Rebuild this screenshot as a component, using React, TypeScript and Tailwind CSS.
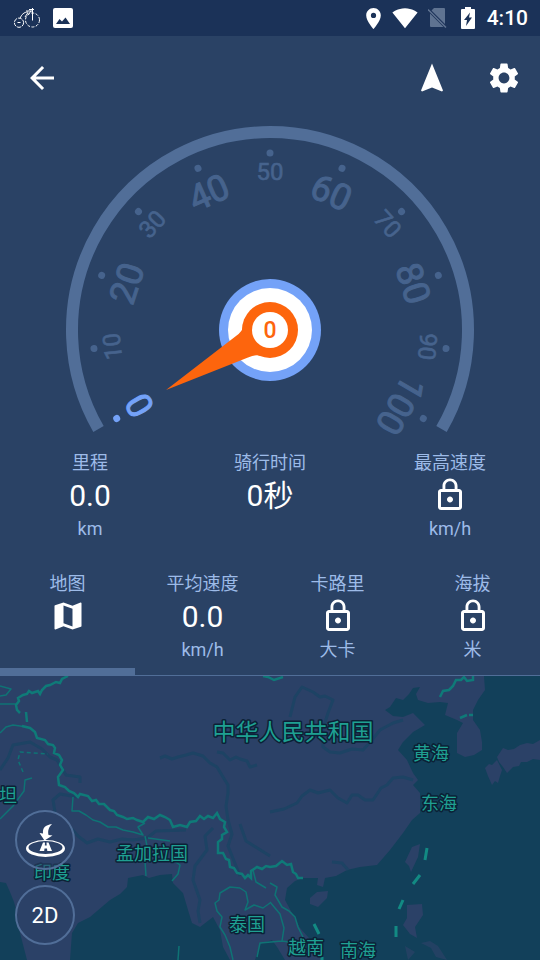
import { MdArrowBack, MdLocationOn, MdLockOutline, MdMap, MdSettings, MdSignalWifi4Bar } from "react-icons/md";

const marks = [0, 10, 20, 30, 40, 50, 60, 70, 80, 90, 100];

const mapLabels = [
  { text: "中华人民共和国", x: 293, y: 64, size: 23 },
  { text: "黄海", x: 431, y: 84, size: 18 },
  { text: "东海", x: 439, y: 134, size: 18 },
  { text: "坦", x: 8, y: 126, size: 18 },
  { text: "孟加拉国", x: 152, y: 184, size: 18 },
  { text: "印度", x: 52, y: 203, size: 18 },
  { text: "泰国", x: 247, y: 255, size: 18 },
  { text: "越南", x: 306, y: 278, size: 18 },
  { text: "南海", x: 358, y: 281, size: 18 },
];

const StatusBar = () => (
  <div className="flex h-9 items-center justify-between bg-[#1b3258] pl-3 pr-3 text-white">
    <div className="flex items-center gap-3">
      <svg width="29" height="24" viewBox="12 6 29 24" fill="none" stroke="currentColor" strokeWidth="1">
        <circle cx="19" cy="22.7" r="4.6" strokeDasharray="4 1" />
        <circle cx="32.5" cy="20" r="7" strokeDasharray="3 1.5" />
        <path d="M17.500 22.500h3M20 18.500c1.500-4 4-6.500 8-6.500M25 17l3-4.500M28 15l3-4M32.500 8v12.500M29 9.500h5M26 11h6" />
      </svg>
      <svg width="20" height="20" viewBox="0 0 20 20">
        <rect width="20" height="20" rx="2" fill="#fff" />
        <path d="M3 16l3.500-5 2.500 2.500 3.500-4L17 16z" fill="#1b3258" />
      </svg>
    </div>
    <div className="flex items-center">
      <MdLocationOn size={25} />
      <MdSignalWifi4Bar size={26} className="ml-1.5" />
      <svg width="19" height="20" viewBox="0 0 19 20" className="ml-2.5">
        <path d="M6 0H16q1 0 1 1v15L3.500 2.500zM2 5.500L15.500 19H3q-1 0-1-1z" fill="#5f7391" />
        <path d="M0 1.500L18 19.500" stroke="#5f7391" strokeWidth="1.500" />
      </svg>
      <svg width="14" height="22" viewBox="0 0 14 22" className="ml-3.5">
        <path d="M4 0h6v2h3q1 0 1 1v18q0 1-1 1H1q-1 0-1-1V3q0-1 1-1h3z" fill="#fff" />
        <path d="M9 5.500L3 13h3L5 19 11 10.500H8z" fill="#1b3258" />
      </svg>
      <span className="ml-3 text-[21px] font-medium leading-6">4:10</span>
    </div>
  </div>
);

const TopBar = () => (
  <div className="flex h-[84px] items-center justify-between pl-6 pr-[18px] text-white">
    <button aria-label="返回">
      <MdArrowBack size={36} />
    </button>
    <div className="flex gap-9">
      <button aria-label="导航">
        <svg width="36" height="36" viewBox="0 0 36 36" fill="currentColor">
          <path d="M18 3.500L29 30.500 28 31.500 18 27.500 8 31.500 7 30.500z" />
        </svg>
      </button>
      <button aria-label="设置">
        <MdSettings size={36} />
      </button>
    </div>
  </div>
);

const Gauge = ({ speed }: { speed: number }) => (
  <svg
    viewBox="-210 -210 420 320"
    className="mx-auto block w-full max-w-[420px] overflow-visible"
    textAnchor="middle"
  >
    <path d="M-171.500 99A198 198 0 1 1 171.500 99" fill="none" stroke="#516e98" strokeWidth="12" />
    {marks.map((mark) => {
      const big = mark % 20 === 0;
      const color = mark === speed ? "#74a2f8" : "#46638d";
      return (
        <g key={mark} transform={`rotate(${mark * 2.4 - 120})`} fill={color} stroke={color}>
          <circle cy="-177" r="3.500" stroke="none" />
          <text y={big ? -138 : -150} fontSize={big ? 36 : 24} strokeWidth={big ? 1 : 0.6}>
            {mark}
          </text>
        </g>
      );
    })}
    <circle r="51" fill="#74a2f8" />
    <circle r="42" fill="#fff" />
    <g fill="#fd650d">
      <circle r="28" />
      <path
        d="M-104 60L-34 6Q-27 1-27-4L0 0-9 26Q-14 24-22 27.500z"
        transform={`rotate(${speed * 2.4})`}
      />
      <circle r="18" fill="#fff" />
      <text y="8" fontSize="23" fontWeight="500">
        {speed}
      </text>
    </g>
  </svg>
);

type StatProps = { label: string; unit?: string; children: React.ReactNode };

const Stat = ({ label, unit, children }: StatProps) => (
  <div className="flex flex-1 flex-col items-center text-lg leading-[33px] text-[#9dbbe8]">
    <div className="h-[33px]">{label}</div>
    <div className="flex h-[33px] items-center text-[30px] leading-[33px] text-white">{children}</div>
    <div className="h-[33px]">{unit}</div>
  </div>
);

const MapView = () => (
  <div className="relative min-h-[284px] flex-1 overflow-hidden bg-[#2b4167]">
    <svg
      viewBox="0 0 540 284"
      preserveAspectRatio="xMidYMid slice"
      className="absolute inset-0 h-full w-full"
      strokeLinejoin="round"
    >
      {/* sea */}
      <g fill="#12405a">
        <path d="M484 0L485 14 478 24 473 34 473 44 480 54 482 66 482 74 474 79 465 81 457 77 457 57 463 47 457 44 445 39 448 27 440 26 428 27 418 24 416 18 420 11 413 12 409 18 403 24 396 22 390 31 385 34 393 40 403 41 413 37 425 49 413 56 403 66 398 74 407 84 413 97 418 104 413 109 420 117 420 137 412 144 403 157 390 174 377 189 360 191 347 194 336 200 325 202 323 211 317 209 318 202 303 202 295 205 287 212 285 224 292 237 300 252 317 271 323 284 540 284 540 0z" />
        <path d="M70 284L72 257 78 247 90 241 110 224 120 218 127 211 128 202 143 199 149 202 160 199 172 198 173 207 183 217 188 234 192 247 200 251 213 241 220 254 223 271 230 284z" />
        <path d="M0 206L6 207 10 216 14 226 17 237 20 257 27 284 0 284z" />
        <path d="M255 284L260 268 272 264 277 271 285 284z" />
      </g>
      <g fill="#2b4167">
        <path d="M310 222L317 216 328 215 327 222 318 231 310 228z" />
        <path d="M405 186L412 171 420 168 418 181 411 196 409 190z" />
        <path d="M407 229L422 228 423 239 415 251 417 262 410 258 403 249 407 242z" />
        <path d="M485 92L489 88 492 89 497 84 502 94 500 100 498 107 495 105 492 109 488 100z" />
        <path d="M497 81L503 72 508 74 514 73 520 69 527 67 533 68 540 64V84L533 83 527 86 521 86 519 90 513 91 507 97 503 91 499 86z" />
        <path d="M421 267L430 265 438 270 447 284 436 281 431 272zM405 270L415 276 408 284z" opacity=".7" />
      </g>
      {/* rivers */}
      <g fill="none" stroke="#1d4364" strokeWidth="3">
        <path d="M290 41L295 21 302 11 313 16 320 21 325 20 333 24 328 37 323 53 323 71 330 76 340 77 352 73 363 74 372 64 380 54 393 47 403 44" />
        <path d="M270 136L284 133 297 127 302 120 310 114 318 117 330 114 338 122 347 127 352 119 358 119 365 124 373 124 381 112 387 109 393 102 403 101 413 104" />
        <path d="M160 82L165 80 172 83 178 81 186 79 193 77 203 80 210 87 217 91 223 101 228 109 228 117 226 130 228 144M217 76L223 77 230 84 236 81 240 83 247 85 250 91 257 89" />
        <path d="M0 94L8 82 13 69 30 66 42 73 50 81 57 84 63 94 66 99 80 101 80 107M78 121L60 118 53 124 55 136" />
        <path d="M70 151L78 160 87 167 98 163 110 166 122 163 133 164 147 162 156 155 186 154" />
        <path d="M213 152L205 160 207 174 195 190 193 204 200 224 198 235 200 247M228 144L232 158 228 170 240 200M240 148L246 165 270 180" />
        <path d="M332 186L342 187 348 194" />
      </g>
      {/* borders */}
      <g fill="none" stroke="#0f7375" strokeWidth="1.500">
        <path d="M0 57L6 51 13 49 27 51M0 28L16 28M0 10L11 13 6 19 0 20" />
        <path d="M23 96L18 84 20 76 34 77 48 78" strokeDasharray="4 3" />
        <path d="M32 102L25 104 24 115 13 130 0 143" />
        <path d="M73 121L72 135 79 135 86 139 93 144 100 146 108 151 116 151 123 154 133 156 143 159 138 151 145 147" />
        <path d="M145 160L147 170 142 177 145 185 146 200M172 178L173 184 180 189 178 198 172 205M148 162L170 165" />
        <path d="M240 212L230 211 220 217 219 224 215 227 217 235 222 241 220 251 225 259 230 271 233 284" />
        <path d="M240 212L246 216 248 226 245 234 254 229 263 232 270 227M253 194L256 206 266 212" />
        <path d="M270 207L277 211 275 219 282 231 289 235 295 241 298 251 303 261M270 226L280 238 284 252 282 265M257 281L260 267 282 265 303 268" />
        <path d="M178 284L179 270" />
      </g>
      <g fill="none" stroke="#0f7a78" strokeWidth="2.500" strokeLinejoin="miter">
        <path d="M68 0L62 3 60 7 56 6 50 9 46 10 42 14 40 18 38 15 32 17 29 15 27 18 23 19 18 22 19 25 16 29 17 34 20 37M26 36L27 46M22 50L30 52 35 56 37 62 45 64 48 68 53 69 55 72 54 77 59 79 62 84 60 89 63 94 58 101 59 109 65 111 69 115 74 117 78 121 80 118 88 120 92 125 96 124 99 128 104 128 110 134 114 135 117 139 123 141 127 143 133 142 137 144 143 146 148 141 154 143 160 139 165 141 170 144 173 151 180 149 187 151 190 146 196 145 200 140 204 143 208 140 213 142 217 137 220 143 225 146 224 151 227 156 222 159 222 163 218 166 218 177 223 177 226 183 229 184 230 191 234 192 237 197 242 198 245 202 248 199 251 202 251 195 257 191 262 193 266 190 270 191 276 190 282 185 287 189 291 188 293 196 296 198 298 202 303 202" />
        <path d="M263 0L268 1 274 4 283 1M440 21L443 15 449 14 453 10 456 4 461 4 464 1 467 5 473 4V0M460 42L467 39M469 39H473" />
      </g>
      <path
        d="M427 172L425 184M420 199L413 208M403 224L399 233M396 250V261M314 248L319 258M322 281V284"
        stroke="#128a83"
        strokeWidth="3"
      />
      <g fill="#1fa092" stroke="#0b2136" strokeWidth="3" paintOrder="stroke" textAnchor="middle">
        {mapLabels.map((label) => (
          <text key={label.text} x={label.x} y={label.y} fontSize={label.size}>
            {label.text}
          </text>
        ))}
      </g>
    </svg>
    <div className="absolute bottom-[15px] left-[15px] flex flex-col gap-[15px] text-white">
      <button
        aria-label="定位"
        className="flex h-[60px] w-[60px] items-center justify-center rounded-full border-2 border-[#516e98] bg-[#2b4167]/60"
      >
        <svg width="60" height="60" viewBox="0 0 60 60" fill="currentColor" className="shrink-0">
          <path d="M37 14C30 15 27.500 18 28 23.500L24.500 23 29.500 30.500 37.500 25.500 33.500 25C32.500 20.500 34 17 37 14z" />
          <path
            fillRule="evenodd"
            d="M11 38.500a19.500 8.500 0 1 0 39 0a19.500 8.500 0 1 0-39 0zM13.500 37.500a17 6.500 0 1 0 34 0a17 6.500 0 1 0-34 0z"
          />
          <path d="M24.500 41L28 32.500H30L29.800 35.500H31.700L31.500 32.500H33.500L37 41H32.300L32 38.500H29.500L29.200 41z" />
        </svg>
      </button>
      <button className="h-[60px] w-[60px] rounded-full border-2 border-[#516e98] bg-[#2b4167]/60 text-[22px]">
        2D
      </button>
    </div>
  </div>
);

export default function App() {
  return (
    <div className="flex min-h-screen flex-col bg-[#2a4265] font-['Roboto','Noto_Sans_CJK_SC',sans-serif]">
      <StatusBar />
      <TopBar />
      <Gauge speed={0} />

      <div className="mt-1.5 flex">
        <Stat label="里程" unit="km">0.0</Stat>
        <Stat label="骑行时间">0秒</Stat>
        <Stat label="最高速度" unit="km/h">
          <MdLockOutline size={36} className="mb-0.5" />
        </Stat>
      </div>

      <div className="mt-[22px] flex">
        <Stat label="地图">
          <MdMap size={36} className="mb-0.5" />
        </Stat>
        <Stat label="平均速度" unit="km/h">0.0</Stat>
        <Stat label="卡路里" unit="大卡">
          <MdLockOutline size={36} className="mb-0.5" />
        </Stat>
        <Stat label="海拔" unit="米">
          <MdLockOutline size={36} className="mb-0.5" />
        </Stat>
      </div>

      <div className="mt-0.5 border-b border-[#516e98]">
        <div className="h-[7px] w-1/4 bg-[#516e98]" />
      </div>
      <MapView />
    </div>
  );
}
